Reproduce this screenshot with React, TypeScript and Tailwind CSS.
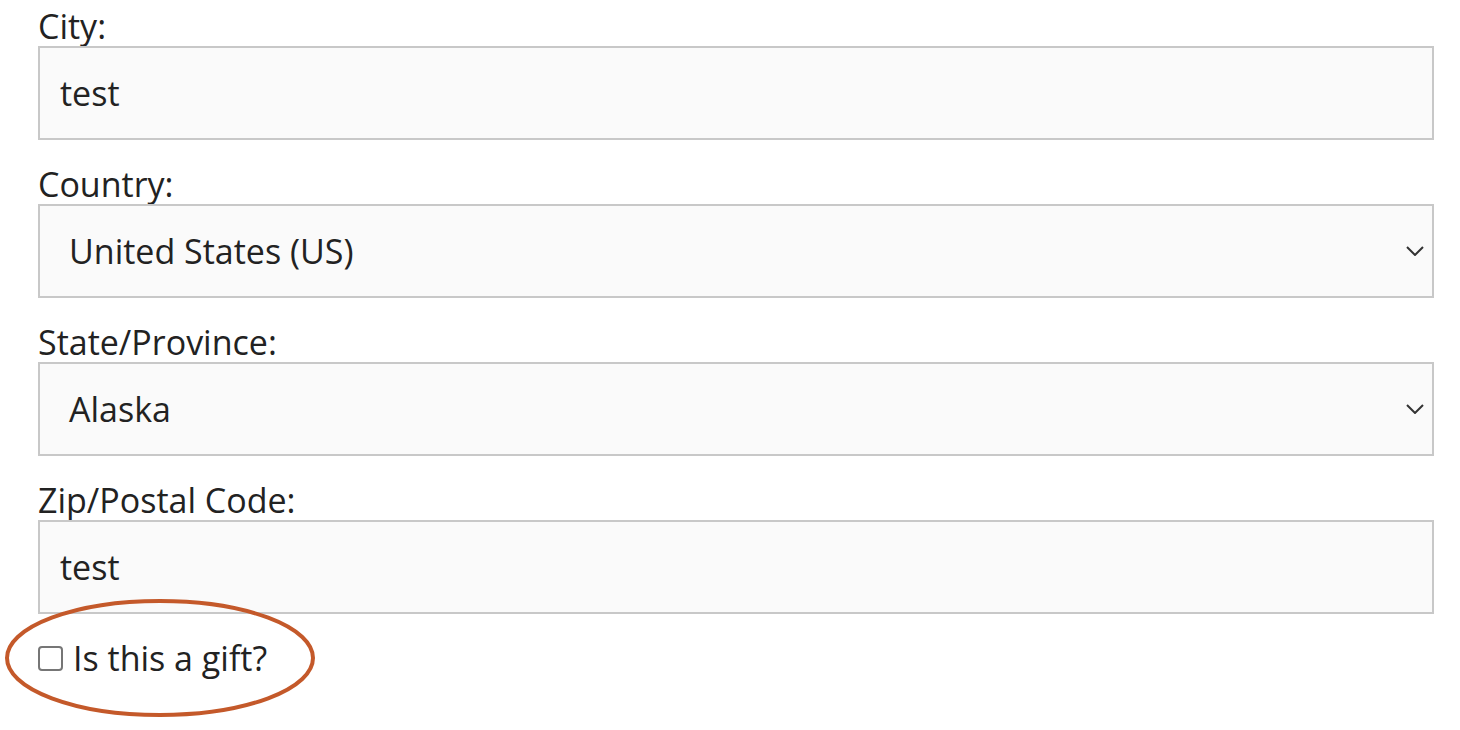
interface FieldProps {
  label: string;
  value: string;
  isSelect?: boolean;
}

const Field = ({ label, value, isSelect }: FieldProps) => {
  return (
    <div className="flex flex-col">
      <label className="text-[34px] leading-[40px] text-[#222]">{label}</label>
      <div className="relative flex h-[94px] items-center border-2 border-[#c8c8c8] bg-[#fafafa]">
        <span
          className={`text-[34px] text-[#222] ${isSelect ? "pl-[29px]" : "pl-[20px]"}`}
        >
          {value}
        </span>
        {isSelect && (
          <svg
            className="absolute right-[8px] top-1/2 -translate-y-1/2"
            width="18"
            height="10"
            viewBox="0 0 18 10"
          >
            <polyline
              points="1,1 9,9 17,1"
              fill="none"
              stroke="#333"
              strokeWidth="2"
            />
          </svg>
        )}
      </div>
    </div>
  );
};

export default function App() {
  return (
    <div
      className="h-[730px] w-[1460px] bg-white pl-[38px] pt-[6px]"
      style={{ fontFamily: '"Open Sans", sans-serif' }}
    >
      <div className="flex w-[1396px] flex-col gap-[24px]">
        <Field label="City:" value="test" />
        <Field label="Country:" value="United States (US)" isSelect />
        <Field label="State/Province:" value="Alaska" isSelect />
        <Field label="Zip/Postal Code:" value="test" />
      </div>

      <div className="relative mt-[24px] flex items-center gap-[10px]">
        <span className="h-[25px] w-[25px] rounded-[4px] border-2 border-[#767676] bg-white" />
        <span className="text-[34px] leading-[40px] text-[#222]">Is this a gift?</span>
        <svg
          className="pointer-events-none absolute left-[-34px] top-[-41px]"
          width="312"
          height="122"
          viewBox="0 0 312 122"
        >
          <ellipse cx="156" cy="61" rx="153" ry="57" fill="none" stroke="#c4592a" strokeWidth="4" />
        </svg>
      </div>
    </div>
  );
}
